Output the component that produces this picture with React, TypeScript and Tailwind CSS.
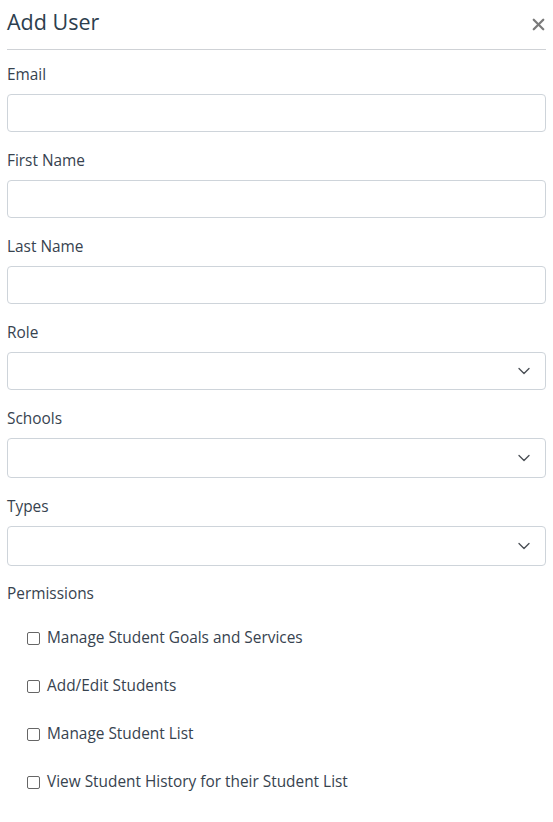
import { X, ChevronDown } from 'lucide-react';

const textFields = ['Email', 'First Name', 'Last Name'];
const selectFields = [
  { label: 'Role', h: 'h-[38px]' },
  { label: 'Schools', h: 'h-[40px]' },
  { label: 'Types', h: 'h-[40px]' },
];
const permissions = [
  'Manage Student Goals and Services',
  'Add/Edit Students',
  'Manage Student List',
  'View Student History for their Student List',
];

export default function App() {
  return (
    <div className="min-h-screen bg-white px-[7px] text-[#37434f]" style={{ fontFamily: '"Open Sans", Lato, sans-serif' }}>
      <div className="flex items-center justify-between h-[50px] border-b border-[#cfd2d6]">
        <h1 className="text-[21.5px] text-[#2d3e4e] leading-none -mt-[6px]">Add User</h1>
        <button type="button" className="text-[#7a7a7a] -mt-[1px] -mr-[2px]">
          <X size={19} strokeWidth={2.8} />
        </button>
      </div>

      {textFields.map((label, i) => (
        <div key={label} className={i === 0 ? 'mt-[14px]' : 'mt-[18px]'}>
          <label className="block text-[15.4px] leading-[22px]">{label}</label>
          <input
            type="text"
            className="mt-[8px] block w-full h-[38px] rounded border border-[#ced4da] bg-white"
          />
        </div>
      ))}

      {selectFields.map((f) => (
        <div key={f.label} className="mt-[18px]">
          <label className="block text-[15.4px] leading-[22px]">{f.label}</label>
          <div className={`mt-[8px] flex items-center justify-end w-full ${f.h} rounded border border-[#ced4da] pr-[11px]`}>
            <ChevronDown size={20} strokeWidth={1.6} className="text-[#4a4f55]" />
          </div>
        </div>
      ))}

      <div className="mt-[17px]">
        <div className="text-[15.4px] leading-[22px]">Permissions</div>
        <div className="pl-[20px] mt-[23px] flex flex-col gap-[28px]">
          {permissions.map((p) => (
            <label key={p} className="flex items-center gap-[7px] text-[15.4px] leading-[20px]">
              <input type="checkbox" className="w-[13px] h-[13px] appearance-none rounded-[2px] border border-[#666] bg-white" />
              {p}
            </label>
          ))}
        </div>
      </div>
    </div>
  );
}
